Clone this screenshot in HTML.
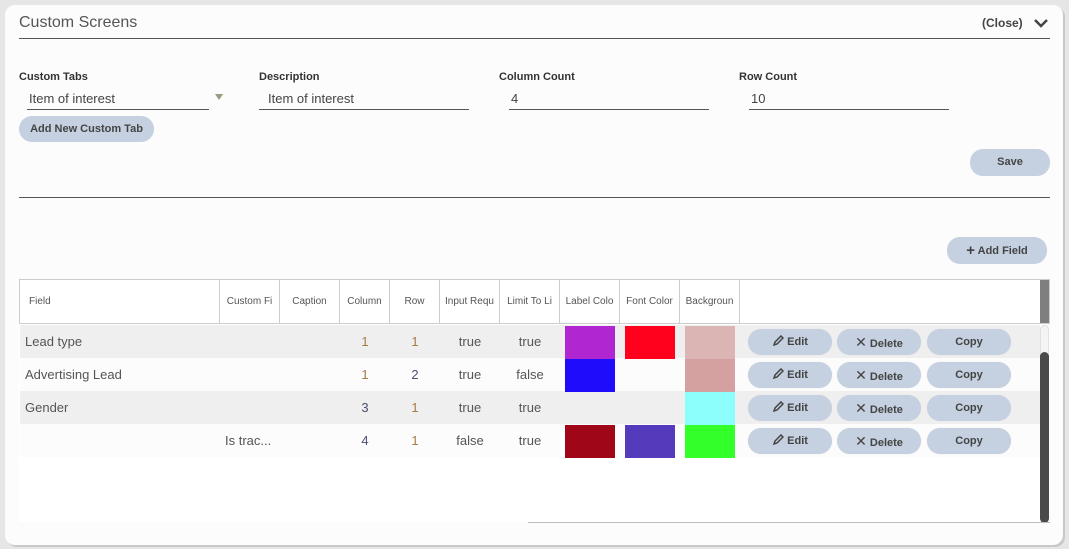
<!DOCTYPE html><html><head><style>
*{margin:0;padding:0;box-sizing:border-box}
body{width:1069px;height:549px;background:#e6e6e6;font-family:"Liberation Sans",sans-serif;position:relative;overflow:hidden;color:#444}
.card{position:absolute;left:5px;top:5px;width:1058px;height:540px;background:#fcfcfc;border-radius:10px;box-shadow:2px 2px 0 #c8c8c8}
.a{position:absolute}
.lbl{font-size:11px;font-weight:bold;color:#333}
.inp{border-bottom:1px solid #555;font-size:13px;color:#444;padding-left:2px;height:20px;line-height:18px}
.btn{position:absolute;background:#c5d0e0;border-radius:13px;font-size:11px;font-weight:bold;color:#444;text-align:center}
.th{position:absolute;top:280px;height:43px;line-height:43px;font-size:10px;color:#555;border-right:1px solid #ccc;overflow:hidden;white-space:nowrap;text-align:center}
.row{position:absolute;left:20px;width:1020px;height:33px}
.c{position:absolute;font-size:13px;color:#555;line-height:33px;text-align:center}
.sw{position:absolute;width:50px;height:33px}
.rb{position:absolute;height:26px;line-height:26px;background:#c5d0e0;border-radius:13px;font-size:11px;font-weight:bold;color:#444;text-align:center;box-shadow:0 0 1px #ddd}
</style></head><body>
<div class="card"></div>
<div class="a" style="left:19px;top:14px;font-size:16px;color:#555">Custom Screens</div>
<div class="a" style="left:982px;top:16px;font-size:12px;font-weight:bold;color:#444">(Close)</div>
<svg class="a" style="left:1033px;top:18px" width="16" height="12"><path d="M2 2 L8 8 L14 2" stroke="#444" stroke-width="2.5" fill="none"/></svg>
<div class="a" style="left:19px;top:38px;width:1031px;border-top:1px solid #555"></div>

<div class="a lbl" style="left:19px;top:71px">Custom Tabs</div>
<div class="a lbl" style="left:259px;top:71px">Description</div>
<div class="a lbl" style="left:499px;top:71px">Column Count</div>
<div class="a lbl" style="left:739px;top:71px">Row Count</div>
<div class="a inp" style="left:27px;top:90px;width:182px">Item of interest</div>
<div class="a" style="left:215px;top:94px;width:0;height:0;border-left:4px solid transparent;border-right:4px solid transparent;border-top:6px solid #9a9a80"></div>
<div class="a inp" style="left:259px;top:90px;width:210px;padding-left:9px">Item of interest</div>
<div class="a inp" style="left:509px;top:90px;width:200px">4</div>
<div class="a inp" style="left:749px;top:90px;width:200px">10</div>
<div class="btn" style="left:19px;top:116px;width:135px;height:26px;line-height:26px">Add New Custom Tab</div>
<div class="btn" style="left:970px;top:149px;width:80px;height:27px;line-height:27px">Save</div>
<div class="a" style="left:19px;top:197px;width:1031px;border-top:1px solid #555"></div>
<div class="btn" style="left:947px;top:237px;width:100px;height:27px;line-height:27px"><span style="font-size:15px;vertical-align:-1px">+</span> Add Field</div>

<div class="a" style="left:19px;top:279px;width:1031px;height:45px;border:1px solid #ccc;background:#fff"></div>
<div class="th" style="left:19px;width:201px;text-align:left;padding-left:10px">Field</div>
<div class="th" style="left:220px;width:60px">Custom Fi</div>
<div class="th" style="left:280px;width:60px">Caption</div>
<div class="th" style="left:340px;width:50px">Column</div>
<div class="th" style="left:390px;width:50px">Row</div>
<div class="th" style="left:440px;width:60px">Input Requ</div>
<div class="th" style="left:500px;width:60px">Limit To Li</div>
<div class="th" style="left:560px;width:60px">Label Colo</div>
<div class="th" style="left:620px;width:60px">Font Color</div>
<div class="th" style="left:680px;width:60px">Backgroun</div>
<div class="a" style="left:1040px;top:280px;width:9px;height:43px;background:#7f7f7f"></div>
<div class="a" style="left:19px;top:324px;width:1021px;height:198px;background:#fff"></div>

<div class="row" style="top:325px;background:#efefef"></div>
<div class="row" style="top:358px;background:#fcfcfc"></div>
<div class="row" style="top:391px;background:#efefef"></div>
<div class="row" style="top:424px;background:#fcfcfc"></div>

<div class="c" style="left:25px;top:325px;text-align:left">Lead type</div>
<div class="c" style="left:25px;top:358px;text-align:left">Advertising Lead</div>
<div class="c" style="left:25px;top:391px;text-align:left">Gender</div>
<div class="c" style="left:225px;top:424px;text-align:left">Is trac...</div>

<div class="c" style="left:340px;width:50px;top:325px;color:#a87a45">1</div>
<div class="c" style="left:340px;width:50px;top:358px;color:#a87a45">1</div>
<div class="c" style="left:340px;width:50px;top:391px;color:#4a5070">3</div>
<div class="c" style="left:340px;width:50px;top:424px;color:#4a5070">4</div>
<div class="c" style="left:390px;width:50px;top:325px;color:#a87a45">1</div>
<div class="c" style="left:390px;width:50px;top:358px;color:#4a5070">2</div>
<div class="c" style="left:390px;width:50px;top:391px;color:#a87a45">1</div>
<div class="c" style="left:390px;width:50px;top:424px;color:#a87a45">1</div>
<div class="c" style="left:440px;width:60px;top:325px">true</div>
<div class="c" style="left:440px;width:60px;top:358px">true</div>
<div class="c" style="left:440px;width:60px;top:391px">true</div>
<div class="c" style="left:440px;width:60px;top:424px">false</div>
<div class="c" style="left:500px;width:60px;top:325px">true</div>
<div class="c" style="left:500px;width:60px;top:358px">false</div>
<div class="c" style="left:500px;width:60px;top:391px">true</div>
<div class="c" style="left:500px;width:60px;top:424px">true</div>

<div class="sw" style="left:565px;top:326px;background:#b027d2"></div>
<div class="sw" style="left:625px;top:326px;background:#ff001d"></div>
<div class="sw" style="left:685px;top:326px;background:#dbb4b4"></div>
<div class="sw" style="left:565px;top:359px;background:#1f0cfa"></div>
<div class="sw" style="left:685px;top:359px;background:#d5a0a0"></div>
<div class="sw" style="left:685px;top:392px;background:#8cfffd"></div>
<div class="sw" style="left:565px;top:425px;background:#9f0617"></div>
<div class="sw" style="left:625px;top:425px;background:#553bbb"></div>
<div class="sw" style="left:685px;top:425px;background:#33ff2a"></div>

<div id="btns"></div>
<script></script>
<div class="rb" style="left:748px;top:329px;width:84px"><svg width="12" height="12" style="vertical-align:-2px"><path d="M2 10 L3 7 L9 1 L11 3 L5 9 Z" fill="none" stroke="#444" stroke-width="1.5"/></svg> Edit</div>
<div class="rb" style="left:837px;top:329px;width:84px"><span style="font-weight:normal;font-size:14px">✕</span> Delete</div>
<div class="rb" style="left:927px;top:329px;width:84px">Copy</div>
<div class="rb" style="left:748px;top:362px;width:84px"><svg width="12" height="12" style="vertical-align:-2px"><path d="M2 10 L3 7 L9 1 L11 3 L5 9 Z" fill="none" stroke="#444" stroke-width="1.5"/></svg> Edit</div>
<div class="rb" style="left:837px;top:362px;width:84px"><span style="font-weight:normal;font-size:14px">✕</span> Delete</div>
<div class="rb" style="left:927px;top:362px;width:84px">Copy</div>
<div class="rb" style="left:748px;top:395px;width:84px"><svg width="12" height="12" style="vertical-align:-2px"><path d="M2 10 L3 7 L9 1 L11 3 L5 9 Z" fill="none" stroke="#444" stroke-width="1.5"/></svg> Edit</div>
<div class="rb" style="left:837px;top:395px;width:84px"><span style="font-weight:normal;font-size:14px">✕</span> Delete</div>
<div class="rb" style="left:927px;top:395px;width:84px">Copy</div>
<div class="rb" style="left:748px;top:428px;width:84px"><svg width="12" height="12" style="vertical-align:-2px"><path d="M2 10 L3 7 L9 1 L11 3 L5 9 Z" fill="none" stroke="#444" stroke-width="1.5"/></svg> Edit</div>
<div class="rb" style="left:837px;top:428px;width:84px"><span style="font-weight:normal;font-size:14px">✕</span> Delete</div>
<div class="rb" style="left:927px;top:428px;width:84px">Copy</div>

<div class="a" style="left:1040px;top:325px;width:9px;height:197px;background:#f4f4f4;border-radius:5px;border:1px solid #e0e0e0"></div>
<div class="a" style="left:1040px;top:352px;width:9px;height:171px;background:#4a4a4a;border-radius:5px"></div>
<div class="a" style="left:528px;top:522px;width:522px;border-top:1px solid #bbb"></div>
</body></html>
